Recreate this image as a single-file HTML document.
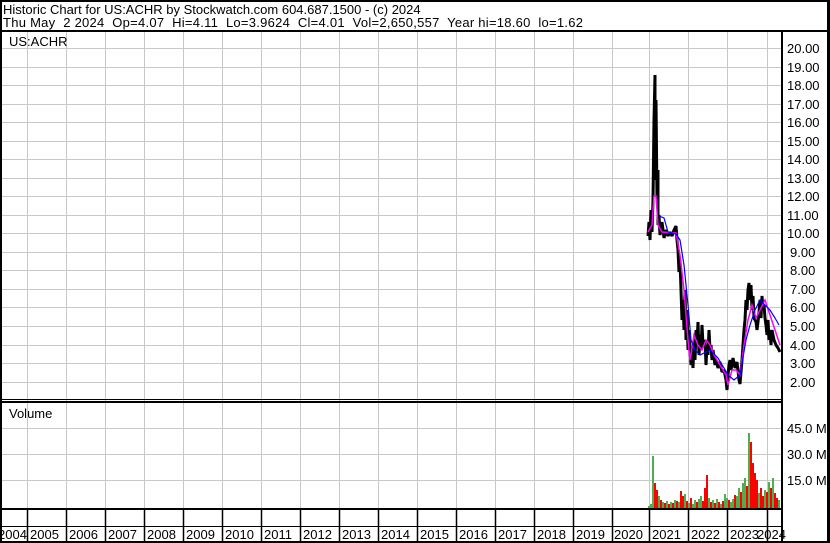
<!DOCTYPE html>
<html><head><meta charset="utf-8"><style>
html,body{margin:0;padding:0;background:#fff;}
svg{display:block;font-family:"Liberation Sans",Arial,sans-serif;}
.pre{white-space:pre;}
</style></head><body>
<svg width="830" height="543" viewBox="0 0 830 543" xmlns="http://www.w3.org/2000/svg">
<rect x="0" y="0" width="830" height="543" fill="#fff"/>
<g stroke="#c8c8c8" stroke-width="1">
<path d="M27.5 32V509M66.5 32V509M105.5 32V509M144.5 32V509M183.5 32V509M222.5 32V509M261.5 32V509M300.5 32V509M339.5 32V509M378.5 32V509M417.5 32V509M456.5 32V509M495.5 32V509M534.5 32V509M573.5 32V509M612.5 32V509M649.5 32V509M688.5 32V509M727.5 32V509M767.5 32V509"/>
<path d="M2 48.5H782M2 67.5H782M2 85.5H782M2 104.5H782M2 122.5H782M2 141.5H782M2 159.5H782M2 178.5H782M2 196.5H782M2 215.5H782M2 233.5H782M2 252.5H782M2 270.5H782M2 289.5H782M2 307.5H782M2 326.5H782M2 345.5H782M2 363.5H782M2 382.5H782"/>
<path d="M2 428.5H782M2 454.5H782M2 480.5H782"/>
</g>
<g fill="#000">
<rect x="0" y="0" width="830" height="2"/>
<rect x="0" y="30" width="830" height="2"/>
<rect x="0" y="0" width="2" height="543"/>
<rect x="827" y="0" width="3" height="543"/>
<rect x="0" y="541" width="830" height="2"/>
<rect x="781" y="30" width="2" height="513"/>
<rect x="0" y="399" width="783" height="1"/>
<rect x="0" y="401" width="783" height="2"/>
<rect x="0" y="508" width="783" height="2"/>
<rect x="0" y="526" width="783" height="1"/>
</g>
<g stroke="#000" stroke-width="1.5">
<path d="M27.5 509V541M66.5 509V541M105.5 509V541M144.5 509V541M183.5 509V541M222.5 509V541M261.5 509V541M300.5 509V541M339.5 509V541M378.5 509V541M417.5 509V541M456.5 509V541M495.5 509V541M534.5 509V541M573.5 509V541M612.5 509V541M649.5 509V541M688.5 509V541M727.5 509V541M767.5 509V541"/>
</g>
<g font-size="13" fill="#000">
<text x="3" y="14">Historic Chart for US:ACHR by Stockwatch.com 604.687.1500 - (c) 2024</text>
<text x="3" y="27" class="pre" xml:space="preserve" textLength="580" lengthAdjust="spacing">Thu May  2 2024  Op=4.07  Hi=4.11  Lo=3.9624  Cl=4.01  Vol=2,650,557  Year hi=18.60  lo=1.62</text>
<text x="9" y="46">US:ACHR</text>
<text x="9" y="418">Volume</text>
</g>
<g font-size="13" fill="#000">
<text x="787" y="53">20.00</text><text x="787" y="72">19.00</text><text x="787" y="90">18.00</text>
<text x="787" y="109">17.00</text><text x="787" y="127">16.00</text><text x="787" y="146">15.00</text>
<text x="787" y="164">14.00</text><text x="787" y="183">13.00</text><text x="787" y="201">12.00</text>
<text x="787" y="220">11.00</text><text x="787" y="238">10.00</text><text x="790" y="257">9.00</text>
<text x="790" y="275">8.00</text><text x="790" y="294">7.00</text><text x="790" y="312">6.00</text>
<text x="790" y="331">5.00</text><text x="790" y="350">4.00</text><text x="790" y="368">3.00</text>
<text x="790" y="387">2.00</text>
<text x="787" y="433">45.0 M</text><text x="787" y="459">30.0 M</text><text x="787" y="485">15.0 M</text>
</g>
<g font-size="13" fill="#000">
<text x="-2" y="539">2004</text><text x="30" y="539">2005</text><text x="69" y="539">2006</text>
<text x="108" y="539">2007</text><text x="147" y="539">2008</text><text x="186" y="539">2009</text>
<text x="225" y="539">2010</text><text x="264" y="539">2011</text><text x="303" y="539">2012</text>
<text x="342" y="539">2013</text><text x="381" y="539">2014</text><text x="420" y="539">2015</text>
<text x="459" y="539">2016</text><text x="498" y="539">2017</text><text x="537" y="539">2018</text>
<text x="576" y="539">2019</text><text x="614" y="539">2020</text><text x="652" y="539">2021</text>
<text x="691" y="539">2022</text><text x="730" y="539">2023</text><text x="757" y="539">2024</text>
</g>
<g>
<rect x="648" y="506" width="2" height="2" fill="#4caf50"/><rect x="650" y="504" width="2" height="4" fill="#4caf50"/>
<rect x="652" y="456" width="2" height="52" fill="#4caf50"/><rect x="654" y="483" width="2" height="25" fill="#f00"/>
<rect x="656" y="490" width="2" height="18" fill="#f00"/><rect x="658" y="496" width="2" height="12" fill="#4caf50"/>
<rect x="660" y="500" width="2" height="8" fill="#f00"/><rect x="662" y="502" width="2" height="6" fill="#4caf50"/>
<rect x="664" y="503" width="2" height="5" fill="#f00"/><rect x="666" y="501" width="2" height="7" fill="#4caf50"/>
<rect x="668" y="504" width="2" height="4" fill="#f00"/><rect x="670" y="502" width="2" height="6" fill="#4caf50"/>
<rect x="672" y="503" width="2" height="5" fill="#f00"/><rect x="674" y="500" width="2" height="8" fill="#4caf50"/>
<rect x="676" y="501" width="2" height="7" fill="#f00"/><rect x="678" y="502" width="2" height="6" fill="#4caf50"/>
<rect x="680" y="491" width="2" height="17" fill="#f00"/><rect x="682" y="496" width="2" height="12" fill="#f00"/>
<rect x="684" y="494" width="2" height="14" fill="#4caf50"/><rect x="686" y="501" width="2" height="7" fill="#f00"/>
<rect x="688" y="503" width="2" height="5" fill="#4caf50"/><rect x="690" y="498" width="2" height="10" fill="#f00"/>
<rect x="692" y="504" width="2" height="4" fill="#4caf50"/><rect x="694" y="500" width="2" height="8" fill="#4caf50"/>
<rect x="696" y="502" width="2" height="6" fill="#f00"/><rect x="698" y="499" width="2" height="9" fill="#4caf50"/>
<rect x="700" y="496" width="2" height="12" fill="#4caf50"/><rect x="702" y="501" width="2" height="7" fill="#f00"/>
<rect x="704" y="488" width="2" height="20" fill="#f00"/><rect x="706" y="475" width="2" height="33" fill="#f00"/>
<rect x="708" y="498" width="2" height="10" fill="#4caf50"/><rect x="710" y="502" width="2" height="6" fill="#f00"/>
<rect x="712" y="500" width="2" height="8" fill="#4caf50"/><rect x="714" y="503" width="2" height="5" fill="#f00"/>
<rect x="716" y="499" width="2" height="9" fill="#4caf50"/><rect x="718" y="502" width="2" height="6" fill="#f00"/>
<rect x="720" y="504" width="2" height="4" fill="#4caf50"/><rect x="722" y="501" width="2" height="7" fill="#f00"/>
<rect x="724" y="494" width="2" height="14" fill="#4caf50"/><rect x="726" y="498" width="2" height="10" fill="#4caf50"/>
<rect x="728" y="500" width="2" height="8" fill="#f00"/><rect x="730" y="502" width="2" height="6" fill="#4caf50"/>
<rect x="732" y="499" width="2" height="9" fill="#4caf50"/><rect x="734" y="495" width="2" height="13" fill="#f00"/>
<rect x="736" y="496" width="2" height="12" fill="#4caf50"/><rect x="738" y="488" width="2" height="20" fill="#4caf50"/>
<rect x="740" y="492" width="2" height="16" fill="#f00"/><rect x="742" y="483" width="2" height="25" fill="#4caf50"/>
<rect x="744" y="478" width="2" height="30" fill="#4caf50"/><rect x="746" y="486" width="2" height="22" fill="#f00"/>
<rect x="748" y="433" width="2" height="75" fill="#4caf50"/><rect x="750" y="442" width="2" height="66" fill="#f00"/>
<rect x="752" y="463" width="2" height="45" fill="#f00"/><rect x="754" y="473" width="2" height="35" fill="#f00"/>
<rect x="756" y="480" width="2" height="28" fill="#f00"/><rect x="758" y="493" width="2" height="15" fill="#4caf50"/>
<rect x="760" y="488" width="2" height="20" fill="#f00"/><rect x="762" y="496" width="2" height="12" fill="#f00"/>
<rect x="764" y="490" width="2" height="18" fill="#4caf50"/><rect x="766" y="492" width="2" height="16" fill="#f00"/>
<rect x="768" y="482" width="2" height="26" fill="#4caf50"/><rect x="770" y="488" width="2" height="20" fill="#f00"/>
<rect x="772" y="478" width="2" height="30" fill="#4caf50"/><rect x="774" y="493" width="2" height="15" fill="#f00"/>
<rect x="776" y="498" width="2" height="10" fill="#f00"/><rect x="778" y="500" width="2" height="8" fill="#4caf50"/>
</g>
<polyline fill="none" stroke="#000" stroke-width="3" stroke-linejoin="bevel" points="648,236 649,222 650,240 651,210 652,232 653,200 654,120 655,75 655,180 656,100 657,200 658,170 658,225 659,215 660,235 662,222 664,238 666,230 668,236 670,232 672,236 674,230 676,226 677,240 678,250 679,272 680,260 681,290 682,320 683,300 684,330 685,290 686,340 687,310 688,350 689,330 690,350 691,365 692,355 693,368 694,340 695,360 696,330 697,345 698,322 699,355 700,335 701,350 702,325 703,345 705,340 706,365 707,345 708,355 709,330 710,350 711,345 712,360 713,350 715,365 716,360 718,368 720,362 722,372 724,370 726,380 727,390 728,375 729,365 730,360 731,370 733,358 735,368 737,362 739,380 740,384 741,372 742,360 743,345 744,330 745,320 746,300 747,310 748,290 749,283 750,300 751,285 752,310 753,296 754,318 756,322 757,330 758,322 759,312 760,300 761,318 762,296 763,310 764,305 765,318 766,325 767,335 768,320 769,340 770,330 771,345 772,330 774,340 776,345 778,348 780,352"/>
<polyline fill="none" stroke="#f0f" stroke-width="1.5" points="648,232 652,225 654,196 656,196 658,225 662,232 676,233 680,255 684,290 688,340 690,360 694,335 698,345 702,350 706,340 710,345 714,355 720,365 726,375 728,385 732,370 736,370 740,375 744,345 748,320 752,305 756,318 760,310 765,300 770,315 775,330 780,345"/>
<polyline fill="none" stroke="#00f" stroke-width="1.2" points="659,216 664,218 668,232 676,234 680,240 684,265 688,305 691,340 695,350 700,355 710,350 718,358 724,368 728,375 734,380 740,375 746,340 750,325 755,310 760,300 765,305 770,310 775,318 779,325"/>
</svg>
</body></html>
